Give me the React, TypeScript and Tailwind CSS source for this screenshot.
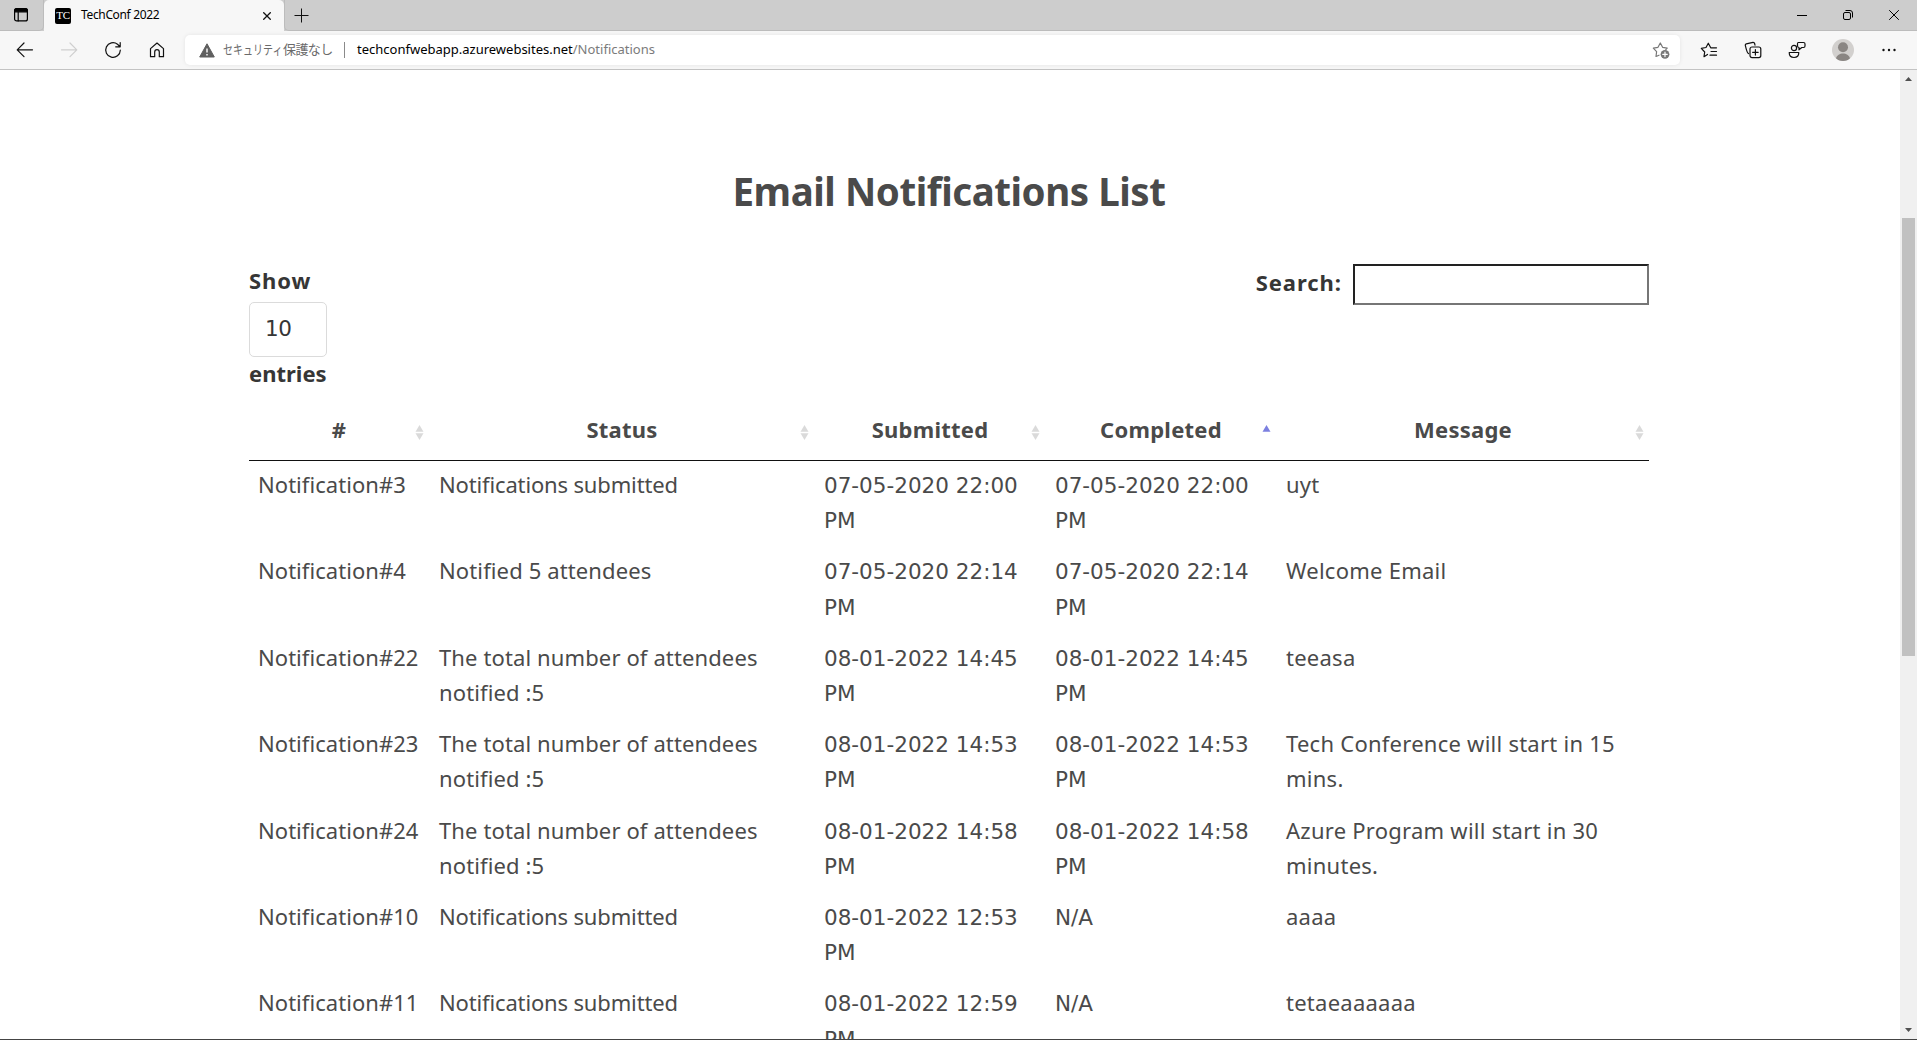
import type { ReactNode } from "react";

type Row = { id: string; status: string; submitted: string; completed: string; message: string };

const rows: Row[] = [
  { id: "Notification#3", status: "Notifications submitted", submitted: "07-05-2020 22:00 PM", completed: "07-05-2020 22:00 PM", message: "uyt" },
  { id: "Notification#4", status: "Notified 5 attendees", submitted: "07-05-2020 22:14 PM", completed: "07-05-2020 22:14 PM", message: "Welcome Email" },
  { id: "Notification#22", status: "The total number of attendees notified :5", submitted: "08-01-2022 14:45 PM", completed: "08-01-2022 14:45 PM", message: "teeasa" },
  { id: "Notification#23", status: "The total number of attendees notified :5", submitted: "08-01-2022 14:53 PM", completed: "08-01-2022 14:53 PM", message: "Tech Conference will start in 15 mins." },
  { id: "Notification#24", status: "The total number of attendees notified :5", submitted: "08-01-2022 14:58 PM", completed: "08-01-2022 14:58 PM", message: "Azure Program will start in 30 minutes." },
  { id: "Notification#10", status: "Notifications submitted", submitted: "08-01-2022 12:53 PM", completed: "N/A", message: "aaaa" },
  { id: "Notification#11", status: "Notifications submitted", submitted: "08-01-2022 12:59 PM", completed: "N/A", message: "tetaeaaaaaa" },
];

const columns = ["#", "Status", "Submitted", "Completed", "Message"];
const grid = "grid grid-cols-[181px_385px_231px_231px_372px]";

function Icon({ children, className = "" }: { children: ReactNode; className?: string }) {
  return (
    <svg viewBox="0 0 18 18" className={`size-[18px] shrink-0 ${className}`} fill="none" stroke="currentColor" strokeWidth="1.2" strokeLinecap="round" strokeLinejoin="round">
      {children}
    </svg>
  );
}

function TabStrip() {
  return (
    <div className="flex h-[31px] shrink-0 bg-[#cdcdcd]">
      <div className="flex w-11 items-center rounded-br-[5px] border-r border-b border-[#bcbcbc] pl-3">
        <Icon className="text-black">
          <rect x="2.6" y="2.6" width="12.8" height="12.3" rx="2" />
          <path d="M2.6 4.6a2 2 0 0 1 2-2h8.8a2 2 0 0 1 2 2v1.2H2.6z" fill="currentColor" />
          <path d="M6.2 6v9" />
        </Icon>
      </div>
      <div className="flex w-60 items-center rounded-t-[5px] bg-[#f7f7f7] pl-[11px]">
        <div className="flex size-4 items-center justify-center rounded-[2px] bg-black font-['Liberation_Serif',serif] text-[11px] leading-none tracking-[-0.4px] text-white">TC</div>
        <span className="ml-[10px] w-[182px] pb-px text-[12px] tracking-[-0.35px] text-black">TechConf 2022</span>
        <svg viewBox="0 0 8 8" className="size-2" stroke="#111" strokeWidth="1.3">
          <path d="M.3.3l7.4 7.4M7.7.3L.3 7.7" />
        </svg>
      </div>
      <div className="flex grow items-center rounded-bl-[5px] border-b border-l border-[#bcbcbc] pl-[9px]">
        <svg viewBox="0 0 15 15" className="size-[15px]" stroke="#111" strokeWidth="1">
          <path d="M7.5 .5v14M.5 7.5h14" />
        </svg>
        <div className="ml-auto flex items-center gap-9 pr-[18px]">
          <svg viewBox="0 0 10 10" className="size-[10px]" stroke="#000" strokeWidth="1"><path d="M0 5.5h10" /></svg>
          <svg viewBox="0 0 10 10" className="size-[10px] overflow-visible" fill="none" stroke="#000" strokeWidth="1">
            <rect x=".5" y="2.5" width="7" height="7" rx="1.5" />
            <path d="M2.5 .5h4.500a2.500 2.500 0 0 1 2.500 2.500v4.500" />
          </svg>
          <svg viewBox="0 0 10 10" className="size-[10px]" stroke="#000" strokeWidth="1"><path d="M.2.2l9.600 9.600M9.800.2L.2 9.800" /></svg>
        </div>
      </div>
    </div>
  );
}

function Toolbar() {
  return (
    <div className="flex h-[39px] shrink-0 items-center border-b border-[#c3c3c3] bg-[#f7f7f7] text-[#111]">
      <Icon className="ml-4"><path d="M8 2L1.200 8.800L8 15.600M1.500 8.800H16.500" /></Icon>
      <Icon className="ml-[26px] text-[#cfcfcf]"><path d="M10 2L16.800 8.800L10 15.600M16.500 8.800H1.500" /></Icon>
      <Icon className="ml-[26px]">
        <path d="M16.300 9.200A7.300 7.300 0 1 1 13.500 3.300L16 5.700M16.200 1.500V5.800H11.700" />
      </Icon>
      <Icon className="ml-[26px]">
        <path d="M2.500 7.600L9 2l6.500 5.600v8.100H11.300V11a2.300 2.300 0 0 0-4.600 0v4.700H2.500z" />
      </Icon>
      <div className="ml-[19px] flex h-[30px] grow items-center rounded-[5px] bg-white pl-[14px] shadow-[0_0_4px_rgba(0,0,0,0.08)]">
        <svg viewBox="0 0 16 15" className="h-[15px] w-4 shrink-0">
          <path d="M8 .8L15.300 14H.7z" fill="#5f5f5f" stroke="#5f5f5f" strokeWidth="1" strokeLinejoin="round" />
          <path d="M8 5.500v4M8 11v1.500" stroke="#fff" strokeWidth="1.400" />
        </svg>
        <div className="ml-2 flex w-[121px] shrink-0 text-[13px] whitespace-nowrap text-[#6a6a6a]">
          <span className="w-[60px] origin-left scale-x-[0.77]">セキュリティ</span>
          <span className="tracking-[-0.6px]">保護なし</span>
        </div>
        <div className="h-4 w-px shrink-0 bg-[#8a8a8a]" />
        <span className="ml-3 text-[13px] whitespace-nowrap text-black">techconfwebapp.azurewebsites.net<span className="text-[#7b7b7b]">/Notifications</span></span>
        <Icon className="mr-[10px] ml-auto text-[#777]">
          <path d="M7 14.200L4 15.500L4.600 10.700L1.300 7.200L6 6.300L8.300 2L10.600 6.300L15.200 7.200L13.800 8.600" />
          <circle cx="13" cy="13.300" r="4.400" fill="currentColor" stroke="none" />
          <path d="M13 11v4.600M10.700 13.300h4.600" stroke="#fff" />
        </Icon>
      </div>
      <Icon className="ml-5">
        <path d="M7.500 13.400L4 15.700L4.700 11L1.300 7.400L6 6.500L8.300 2.200L10.600 6.500M10.800 6.800H16.500M11 10.500H16.500M10 14.200H16.500" />
      </Icon>
      <Icon className="ml-[26px]">
        <path d="M4.500 12.600C3.200 12 1.800 6.500 1.300 4.300C1.200 3.500 1.600 3 2.300 2.800L9 1.300C10 1.200 10.400 1.600 10.600 2.500L11 4.200" />
        <rect x="6" y="6" width="10.800" height="10.600" rx="2" />
        <path d="M11.400 8.500v5.600M8.600 11.300h5.600" />
      </Icon>
      <Icon className="ml-[26px]">
        <circle cx="6" cy="7" r="2.600" />
        <path d="M1.200 11.500H10.800C10.800 14.700 9 16.500 6 16.500S1.200 14.700 1.200 11.500zM10.300 1.500h5.200a1.500 1.500 0 0 1 1.500 1.500v2a1.500 1.500 0 0 1-1.500 1.500h-1.700L11 8.800V6.500A1.700 1.700 0 0 1 9.500 5V2.800Q9.500 1.500 10.300 1.500z" />
      </Icon>
      <svg viewBox="0 0 22 22" className="ml-[26px] size-[22px] shrink-0 overflow-hidden rounded-full bg-[#d2d0ce]" fill="#8a8683">
        <circle cx="11" cy="8.300" r="5" />
        <path d="M4 19.500C5.500 12.800 16.500 12.800 18 19.500L15 22H7z" />
      </svg>
      <svg viewBox="0 0 14 4" className="mr-[21px] ml-[28px] h-1 w-[14px] shrink-0" fill="#111">
        <circle cx="1.500" cy="2" r="1.200" /><circle cx="7" cy="2" r="1.200" /><circle cx="12.500" cy="2" r="1.200" />
      </svg>
    </div>
  );
}

function SortIcon({ ascending }: { ascending: boolean }) {
  return (
    <svg viewBox="0 0 9 15" className="h-[15px] w-[9px]">
      <path d="M4.500 0L8.500 6.700H.5z" fill={ascending ? "#7c80e0" : "#dadada"} />
      {!ascending && <path d="M4.500 15L8.500 8.300H.5z" fill="#dadada" />}
    </svg>
  );
}

function Scrollbar() {
  return (
    <div className="flex w-[17px] shrink-0 flex-col items-center bg-[#f0f0f0] pt-[7px] pb-[7px]">
      <svg viewBox="0 0 7 4" className="h-1 w-[7px]"><path d="M0 4L3.500 0L7 4z" fill="#505050" /></svg>
      <div className="mt-[137px] h-[438px] w-[13px] bg-[#c1c1c1]" />
      <svg viewBox="0 0 7 4" className="mt-auto h-1 w-[7px]"><path d="M0 0L3.500 4L7 0z" fill="#505050" /></svg>
    </div>
  );
}

export default function App() {
  return (
    <div className="flex h-[1040px] w-[1917px] flex-col overflow-hidden border-b border-[#444] bg-white font-['Noto_Sans','Noto_Sans_CJK_JP',sans-serif]">
      <TabStrip />
      <Toolbar />
      <div className="flex min-h-0 grow">
        <main className="grow overflow-hidden pl-[249px] text-[22px] leading-[35.2px] text-[#4a4a4a]">
          <h1 className="mt-24 w-[1400px] text-center text-[38.5px] leading-[50px] font-bold tracking-[-0.45px]">Email Notifications List</h1>
          <div className="mt-[47px] flex h-[134px] w-[1400px] justify-between font-bold text-[#363636]">
            <div>
              <div className="h-[39px] tracking-[0.9px]">Show</div>
              <div className="h-[55px] w-[78px] rounded-[5px] border border-[#dbdbdb] pt-2 pl-[15px] font-['DejaVu_Sans',sans-serif] text-[21.5px] font-normal tracking-[-0.5px]">10</div>
              <div className="-mt-px">entries</div>
            </div>
            <div className="mt-px flex h-[41px] items-center">
              <span className="mr-[11px] pb-1 tracking-[0.95px]">Search:</span>
              <div className="h-[41px] w-[296px] border-2 border-t-[#222] border-r-[#767676] border-b-[#767676] border-l-[#222]" />
            </div>
          </div>
          <div className={`${grid} h-[64px] w-[1400px] border-b border-[#111] text-center font-bold tracking-[0.25px]`}>
            {columns.map((name) => (
              <div key={name} className="flex items-center pt-[3px] pr-[6px] last:pr-[5px]">
                <span className="grow pl-[5px]">{name}</span>
                <div className="-ml-[9px] pt-[5px]"><SortIcon ascending={name === "Completed"} /></div>
              </div>
            ))}
          </div>
          {rows.map((r) => (
            <div key={r.id} className={`${grid} h-[86.4px] w-[1400px] pt-[6px]`}>
              <div className="pl-[9px] tracking-[0.05px]">{r.id}</div>
              <div className={r.status.startsWith("Notifications") ? "pl-[9px] tracking-[-0.15px]" : "pr-10 pl-[9px] tracking-[0.12px]"}>{r.status}</div>
              <div className="pt-px pr-3 pl-[9px] font-['DejaVu_Sans',sans-serif] text-[21.5px]">{r.submitted}</div>
              <div className="pt-px pr-3 pl-[9px] font-['DejaVu_Sans',sans-serif] text-[21.5px]">{r.completed}</div>
              <div className="pr-3 pl-[9px] tracking-[0.25px]">{r.message}</div>
            </div>
          ))}
        </main>
        <Scrollbar />
      </div>
    </div>
  );
}
